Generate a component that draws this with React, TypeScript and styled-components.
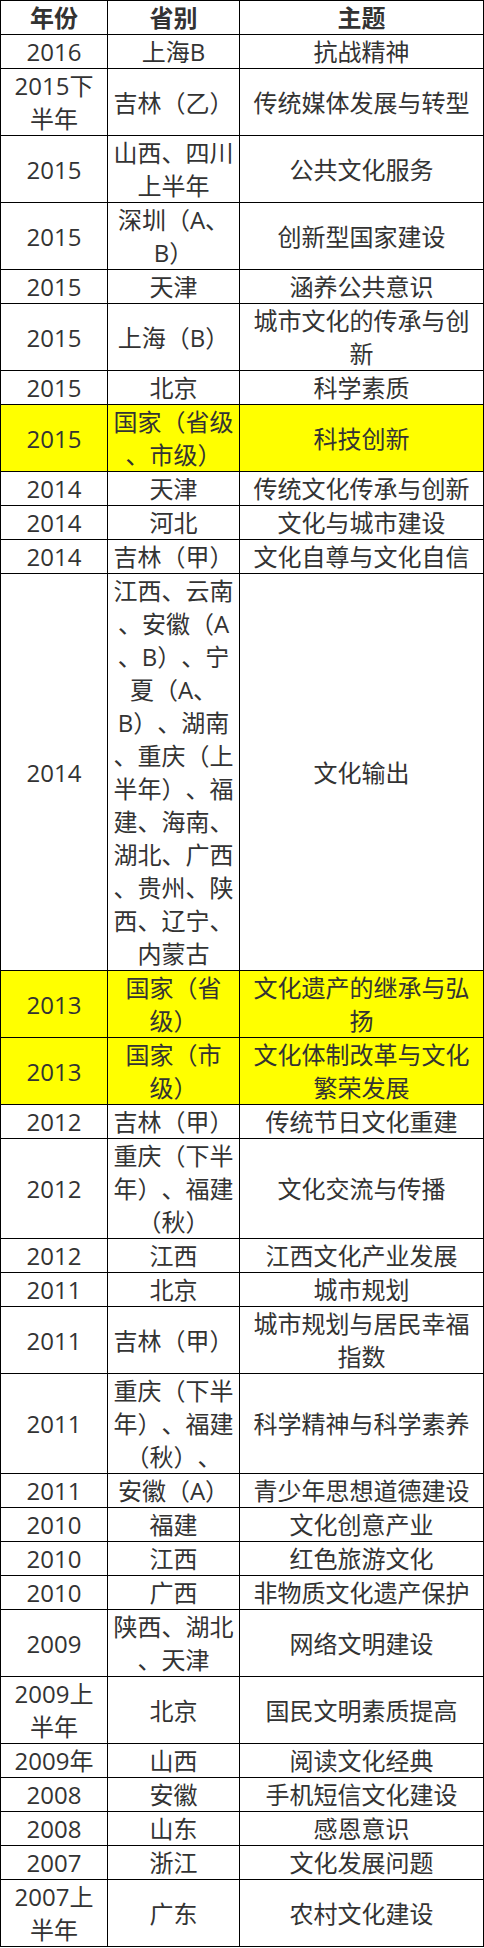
import React from "react"
import styled, { createGlobalStyle } from "styled-components"

const GlobalStyle = createGlobalStyle`
    html, body {
        margin: 0;
        padding: 0;
        background: #fff;
    }
`

const Table = styled.table`
    width: 483px;
    table-layout: fixed;
    border-collapse: collapse;

    font-family: "Open Sans", "Noto Sans CJK SC", sans-serif;
    font-size: 24px;
    line-height: 33px;
    color: #333;
    text-spacing-trim: space-all;
    font-kerning: none;
`

const Col = styled.col<{ $w: number }>`
    width: ${(p) => p.$w}px;
`

const Row = styled.tr<{ $hl?: boolean }>`
    background-color: ${(p) => (p.$hl ? "#ffff00" : "#fff")};
`

const HeadCell = styled.th`
    border: 1px solid #000;
    padding: 0;
    font-weight: 700;
    text-align: center;
    vertical-align: middle;
`

const Cell = styled.td`
    border: 1px solid #000;
    padding: 0;
    text-align: center;
    vertical-align: middle;
`

const Line = styled.span`
    display: block;
    white-space: nowrap;
`

type Entry = { year: string[]; region: string[]; topic: string[]; hl?: boolean }

const rows: Entry[] = [
    { year: ["2016"], region: ["上海B"], topic: ["抗战精神"] },
    { year: ["2015下", "半年"], region: ["吉林（乙）"], topic: ["传统媒体发展与转型"] },
    { year: ["2015"], region: ["山西、四川", "上半年"], topic: ["公共文化服务"] },
    { year: ["2015"], region: ["深圳（A、", "B）"], topic: ["创新型国家建设"] },
    { year: ["2015"], region: ["天津"], topic: ["涵养公共意识"] },
    { year: ["2015"], region: ["上海（B）"], topic: ["城市文化的传承与创", "新"] },
    { year: ["2015"], region: ["北京"], topic: ["科学素质"] },
    { year: ["2015"], region: ["国家（省级", "、市级）"], topic: ["科技创新"], hl: true },
    { year: ["2014"], region: ["天津"], topic: ["传统文化传承与创新"] },
    { year: ["2014"], region: ["河北"], topic: ["文化与城市建设"] },
    { year: ["2014"], region: ["吉林（甲）"], topic: ["文化自尊与文化自信"] },
    {
        year: ["2014"],
        region: [
            "江西、云南",
            "、安徽（A",
            "、B）、宁",
            "夏（A、",
            "B）、湖南",
            "、重庆（上",
            "半年）、福",
            "建、海南、",
            "湖北、广西",
            "、贵州、陕",
            "西、辽宁、",
            "内蒙古",
        ],
        topic: ["文化输出"],
    },
    { year: ["2013"], region: ["国家（省", "级）"], topic: ["文化遗产的继承与弘", "扬"], hl: true },
    { year: ["2013"], region: ["国家（市", "级）"], topic: ["文化体制改革与文化", "繁荣发展"], hl: true },
    { year: ["2012"], region: ["吉林（甲）"], topic: ["传统节日文化重建"] },
    { year: ["2012"], region: ["重庆（下半", "年）、福建", "（秋）"], topic: ["文化交流与传播"] },
    { year: ["2012"], region: ["江西"], topic: ["江西文化产业发展"] },
    { year: ["2011"], region: ["北京"], topic: ["城市规划"] },
    { year: ["2011"], region: ["吉林（甲）"], topic: ["城市规划与居民幸福", "指数"] },
    { year: ["2011"], region: ["重庆（下半", "年）、福建", "（秋）、"], topic: ["科学精神与科学素养"] },
    { year: ["2011"], region: ["安徽（A）"], topic: ["青少年思想道德建设"] },
    { year: ["2010"], region: ["福建"], topic: ["文化创意产业"] },
    { year: ["2010"], region: ["江西"], topic: ["红色旅游文化"] },
    { year: ["2010"], region: ["广西"], topic: ["非物质文化遗产保护"] },
    { year: ["2009"], region: ["陕西、湖北", "、天津"], topic: ["网络文明建设"] },
    { year: ["2009上", "半年"], region: ["北京"], topic: ["国民文明素质提高"] },
    { year: ["2009年"], region: ["山西"], topic: ["阅读文化经典"] },
    { year: ["2008"], region: ["安徽"], topic: ["手机短信文化建设"] },
    { year: ["2008"], region: ["山东"], topic: ["感恩意识"] },
    { year: ["2007"], region: ["浙江"], topic: ["文化发展问题"] },
    { year: ["2007上", "半年"], region: ["广东"], topic: ["农村文化建设"] },
]

function Lines({ items }: { items: string[] }) {
    return (
        <>
            {items.map((t, i) => (
                <Line key={i}>{t}</Line>
            ))}
        </>
    )
}

export default function App() {
    return (
        <>
            <GlobalStyle />
            <Table>
                <colgroup>
                    <Col $w={107} />
                    <Col $w={132} />
                    <Col $w={244} />
                </colgroup>
                <thead>
                    <Row>
                        <HeadCell>年份</HeadCell>
                        <HeadCell>省别</HeadCell>
                        <HeadCell>主题</HeadCell>
                    </Row>
                </thead>
                <tbody>
                    {rows.map((r, i) => (
                        <Row key={i} $hl={r.hl}>
                            <Cell><Lines items={r.year} /></Cell>
                            <Cell><Lines items={r.region} /></Cell>
                            <Cell><Lines items={r.topic} /></Cell>
                        </Row>
                    ))}
                </tbody>
            </Table>
        </>
    )
}
